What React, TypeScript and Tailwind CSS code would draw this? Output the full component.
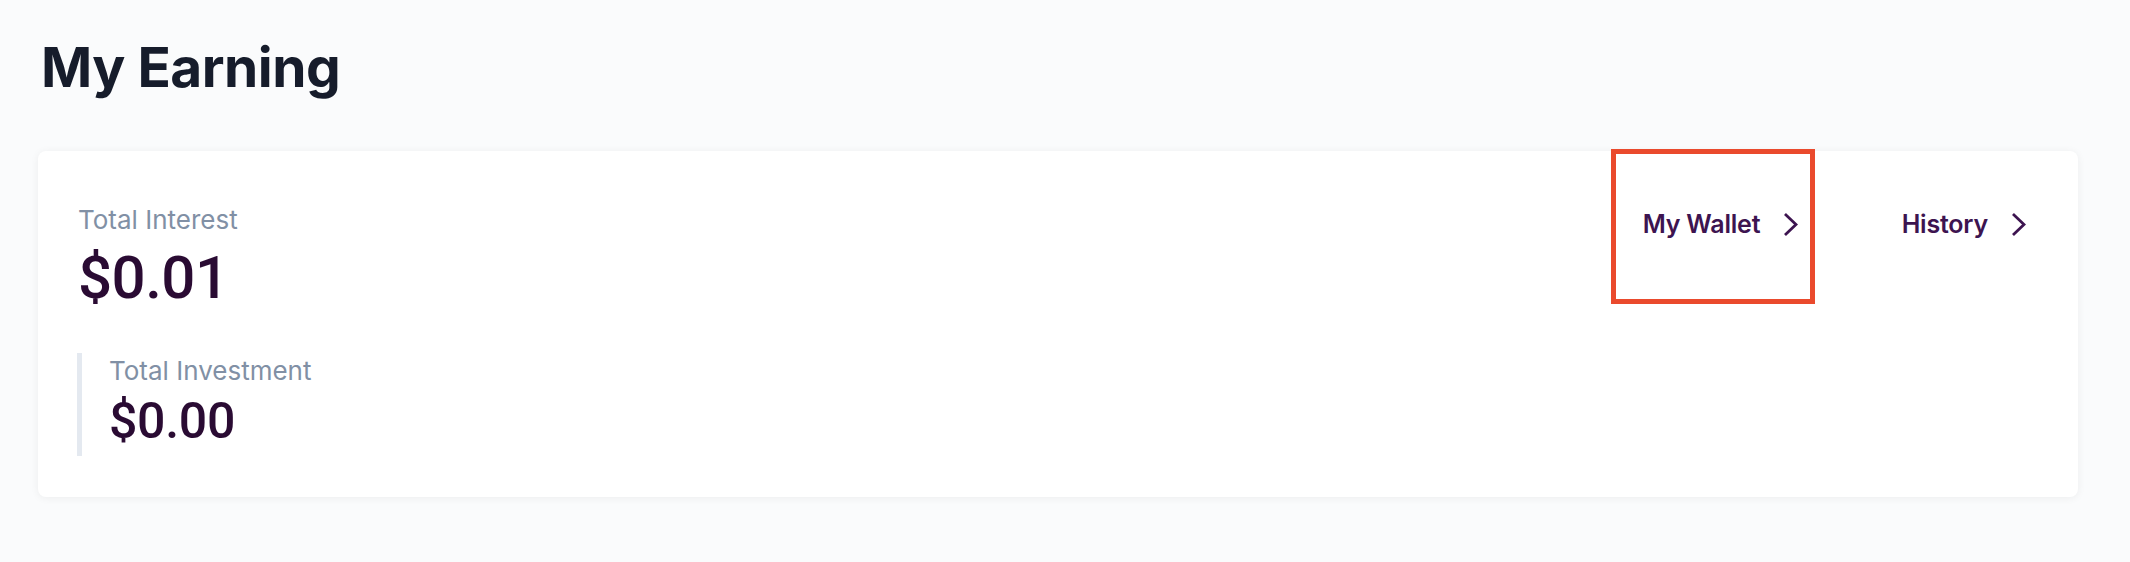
const Chevron = () => (
  <svg width="14" height="23" viewBox="0 0 14 23" fill="none" className="shrink-0">
    <path d="M2 2 L12 11.5 L2 21" stroke="#3d1450" strokeWidth="2.8" strokeLinecap="square" strokeLinejoin="miter" />
  </svg>
)

const LinkItem = ({ label, boxed }: { label: string; boxed?: boolean }) => (
  <div
    className={
      boxed
        ? "flex h-[155px] w-[204px] -mt-[2px] items-start border-[5px] border-[#ea4a2d] pl-[27px] pr-[9px] pt-[52px]"
        : "flex h-[155px] -mt-[2px] items-start pt-[57px] ml-[87px]"
    }
  >
    <div className="flex items-center gap-[24px]">
      <span className="text-[25px] leading-[37px] font-semibold text-[#3d1450] tracking-[-0.2px]">{label}</span>
      <Chevron />
    </div>
  </div>
)

export default function App() {
  return (
    <div className="min-h-screen bg-[#fafbfc] pt-[39px] pb-10" style={{ fontFamily: "Inter, 'Noto Sans', sans-serif" }}>
      <h1 className="ml-[41px] text-[55px] leading-[56px] font-bold text-[#161c2b] tracking-[-0.5px]">My Earning</h1>

      <div className="ml-[38px] mr-[52px] mt-[56px] flex h-[346px] justify-between rounded-[8px] bg-white pl-[40px] pr-[52px] shadow-[0_1px_8px_rgba(0,0,0,0.06)]">
        <div className="pt-[53px]">
          <div className="text-[26px] leading-[32px] text-[#8190a5]">Total Interest</div>
          <div className="mt-[12px] text-[60px] leading-[60px] font-medium text-[#2a0b33] tracking-[-0.5px]" style={{ fontFamily: "Roboto, sans-serif" }}>
            $0.01
          </div>

          <div className="-ml-[1px] mt-[45px] border-l-[5px] border-[#e4e9f0] pl-[27px] pt-[2px] pb-[10px]">
            <div className="text-[26px] leading-[32px] text-[#8190a5]">Total Investment</div>
            <div className="mt-[9px] text-[50px] leading-[50px] font-medium text-[#2a0b33] tracking-[-0.3px]" style={{ fontFamily: "Roboto, sans-serif" }}>
              $0.00
            </div>
          </div>
        </div>

        <div className="flex items-start">
          <LinkItem label="My Wallet" boxed />
          <LinkItem label="History" />
        </div>
      </div>
    </div>
  )
}
